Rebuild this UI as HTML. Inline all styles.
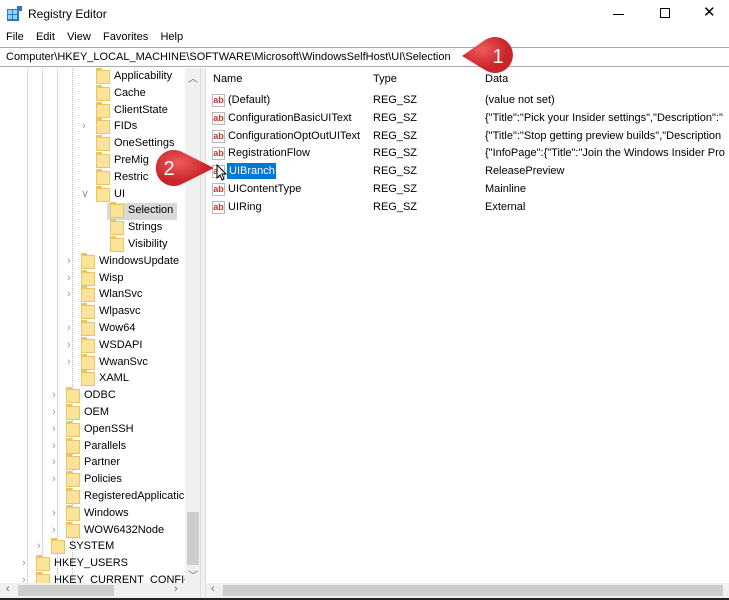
<!DOCTYPE html>
<html><head><style>
*{margin:0;padding:0;box-sizing:border-box}
body{width:729px;height:600px;overflow:hidden;background:#fff;font-family:"Liberation Sans",sans-serif;font-size:11px;color:#000;position:relative}
.a{position:absolute;white-space:nowrap}
.f{position:absolute;width:14px;height:14px;background:#fbe39a;border:1px solid #e8c560}
.f:before{content:"";position:absolute;left:-1px;top:-3px;width:6px;height:3px;background:#e8c560}
.row{position:absolute;height:17px;line-height:17px}
.ch{position:absolute;color:#999;font-size:11px}
.ic{position:absolute;width:13px;height:13px;border:1px solid #b9b9b9;background:#fff;font-size:9px;line-height:10px;color:#c0392b;font-weight:bold;text-align:center}
</style></head><body>
<svg class="a" style="left:7px;top:6px" width="16" height="16"><rect x="0" y="3" width="12" height="12" fill="#2b79c2"/><rect x="1" y="4" width="4" height="4" fill="#9cd1f7"/><rect x="6" y="4" width="4" height="4" fill="#9cd1f7"/><rect x="1" y="9" width="4" height="4" fill="#9cd1f7"/><rect x="6" y="9" width="4" height="4" fill="#9cd1f7"/><rect x="10" y="0" width="5" height="5" fill="#2b79c2"/></svg>
<div class="a" style="left:28px;top:7px;font-size:12px">Registry Editor</div>
<div class="a" style="left:613px;top:14px;width:11px;height:1px;background:#000"></div>
<div class="a" style="left:660px;top:8px;width:10px;height:10px;border:1px solid #000"></div>
<div class="a" style="left:703px;top:3px;font-size:15px">✕</div>
<div class="a" style="left:6px;top:31px">File&nbsp;&nbsp;&nbsp; Edit&nbsp;&nbsp;&nbsp; View&nbsp;&nbsp;&nbsp; Favorites&nbsp;&nbsp;&nbsp; Help</div>
<div class="a" style="left:0;top:47px;width:729px;height:20px;border-top:1px solid #aaa;border-bottom:1px solid #aaa"></div>
<div class="a" style="left:6px;top:51px">Computer\HKEY_LOCAL_MACHINE\SOFTWARE\Microsoft\WindowsSelfHost\UI\Selection</div>
<div class="a" style="left:0;top:68px;width:185px;height:515px;overflow:hidden" id="tree">
<div class="a" style="left:107px;top:135px;width:70px;height:17px;background:#d9d9d9"></div>
</div>
<div class="a" style="left:185px;top:68px;width:15px;height:515px;background:#f0f0f0"></div>
<div class="a" style="left:188px;top:70px;color:#666;font-size:10px">︿</div>
<div class="a" style="left:187px;top:512px;width:12px;height:53px;background:#cdcdcd"></div>
<div class="a" style="left:188px;top:567px;color:#666;font-size:10px">﹀</div>
<div class="a" style="left:200px;top:68px;width:6px;height:532px;background:#f0f0f0;border-left:1px solid #ddd;border-right:1px solid #ddd"></div>
<div class="a" style="left:0;top:583px;width:200px;height:15px;background:#f0f0f0"></div>
<div class="a" style="left:18px;top:585px;width:96px;height:11px;background:#cdcdcd"></div>
<div class="a" style="left:6px;top:583px;color:#666">‹</div>
<div class="a" style="left:174px;top:583px;color:#666">›</div>
<div class="a" style="left:206px;top:583px;width:523px;height:15px;background:#f0f0f0"></div>
<div class="a" style="left:223px;top:585px;width:500px;height:11px;background:#cdcdcd"></div>
<div class="a" style="left:211px;top:583px;color:#666">‹</div>
<div class="a" style="left:0;top:598px;width:729px;height:2px;background:#222"></div>
<div class="a" style="left:213px;top:73px">Name</div>
<div class="a" style="left:373px;top:73px">Type</div>
<div class="a" style="left:485px;top:73px">Data</div>
<div id="vals"></div>
<div class="a" style="left:227px;top:163px;width:49px;height:16px;background:#0078d7"></div>
<div class="a" style="left:229px;top:164px;color:#fff;line-height:15px">UIBranch</div>
<svg class="a" style="left:216px;top:164px" width="12" height="18"><path d="M1 1 L1 14 L4 11 L6 16 L8 15 L6 10 L10 10 Z" fill="#fff" stroke="#000"/></svg>
<svg class="a" style="left:0;top:0" width="729" height="600">
<defs><radialGradient id="g" cx="40%" cy="35%"><stop offset="0" stop-color="#f05a5a"/><stop offset="1" stop-color="#c9262c"/></radialGradient></defs>
<path d="M462 56 L485 40 A18 18 0 1 1 485 70 Z" fill="url(#g)"/>
<text x="498" y="63" font-family="Liberation Sans" font-size="20" fill="#fff" text-anchor="middle">1</text>
<path d="M214 168 L182 152 A18 18 0 1 0 182 184 Z" fill="url(#g)"/>
<text x="169" y="175" font-family="Liberation Sans" font-size="20" fill="#fff" text-anchor="middle">2</text>
</svg>
<script>
var t=[["Applicability",4,""],["Cache",4,""],["ClientState",4,""],["FIDs",4,">"],["OneSettings",4,""],["PreMig",4,""],["Restric",4,""],["UI",4,"v"],["Selection",5,""],["Strings",5,""],["Visibility",5,""],["WindowsUpdate",3,">"],["Wisp",3,">"],["WlanSvc",3,">"],["Wlpasvc",3,""],["Wow64",3,">"],["WSDAPI",3,">"],["WwanSvc",3,">"],["XAML",3,""],["ODBC",2,">"],["OEM",2,">"],["OpenSSH",2,">"],["Parallels",2,">"],["Partner",2,">"],["Policies",2,">"],["RegisteredApplicatic",2,""],["Windows",2,">"],["WOW6432Node",2,">"],["SYSTEM",1,">"],["HKEY_USERS",0,">"],["HKEY_CURRENT_CONFIG",0,">"]];
var fx=[36,51,66,81,96,110],h="",tr=document.getElementById("tree");
[27,42,57,72].forEach(function(x){h+='<div class="a" style="left:'+x+'px;top:0;height:515px;border-left:1px dotted #bbb"></div>'});
t.forEach(function(r,i){var y=Math.round(i*16.8);var x=fx[r[1]];
h+='<div class="f" style="left:'+x+'px;top:'+(y+2)+'px"></div>';
h+='<div class="row" style="left:'+(x+18)+'px;top:'+y+'px">'+r[0]+'</div>';
if(r[2]==">")h+='<div class="ch" style="left:'+(x-14)+'px;top:'+(y+2)+'px">&#x203A;</div>';
if(r[2]=="v")h+='<div class="ch" style="left:'+(x-15)+'px;top:'+(y+1)+'px">&#x2228;</div>';
});
tr.innerHTML+=h;
var v=[["(Default)","(value not set)"],["ConfigurationBasicUIText","{\"Title\":\"Pick your Insider settings\",\"Description\":\""],["ConfigurationOptOutUIText","{\"Title\":\"Stop getting preview builds\",\"Description"],["RegistrationFlow","{\"InfoPage\":{\"Title\":\"Join the Windows Insider Pro"],["UIBranch","ReleasePreview"],["UIContentType","Mainline"],["UIRing","External"]];
h="";v.forEach(function(r,i){var y=92+i*17.8;
h+='<div class="ic" style="left:212px;top:'+(y+2)+'px">ab</div>';
if(i!=4)h+='<div class="row" style="left:228px;top:'+y+'px;width:140px;overflow:hidden">'+r[0]+'</div>';
h+='<div class="row" style="left:373px;top:'+y+'px">REG_SZ</div>';
h+='<div class="row" style="left:485px;top:'+y+'px;width:244px;overflow:hidden">'+r[1]+'</div>';});
document.getElementById("vals").innerHTML=h;
</script>
</body></html>
